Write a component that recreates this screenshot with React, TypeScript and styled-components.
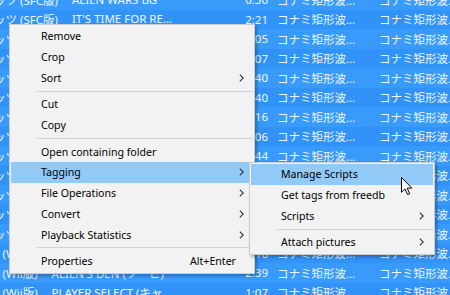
import { createGlobalStyle, styled } from 'styled-components'

type Track = {
  album: string
  title: string
  time: string
}

type MenuEntry =
  | { kind: 'sep' }
  | { kind: 'item'; label: string; shortcut?: string; sub?: boolean; active?: boolean }

const SFC = '魂斗羅スピリッツ (SFC版)'
const WII = '魂斗羅ReBirth (Wii版)'
const COMPOSER = 'コナミ矩形波…'

const tracks: Track[] = [
  { album: SFC, title: 'ALIEN WARS BG', time: '0:30' },
  { album: SFC, title: "IT'S TIME FOR RE…", time: '2:21' },
  { album: SFC, title: 'GROUND ZERO', time: '1:05' },
  { album: SFC, title: 'NEO KOBE STEEL FAC…', time: '1:07' },
  { album: SFC, title: 'THE ROAD WARRIORS', time: '1:40' },
  { album: SFC, title: 'TRIUMPH', time: '0:40' },
  { album: SFC, title: 'BOMBER BIRD', time: '1:16' },
  { album: SFC, title: 'SUPER HUMAN', time: '1:06' },
  { album: SFC, title: 'PRELUDE TO THE BATT…', time: '1:44' },
  { album: SFC, title: 'KIMKOH', time: '2:21' },
  { album: SFC, title: 'A SEA OF BOMBS', time: '0:45' },
  { album: SFC, title: 'ENDING', time: '1:58' },
  { album: SFC, title: 'GAME OVER', time: '0:07' },
  { album: WII, title: 'TITLE', time: '0:16' },
  { album: WII, title: "ALIEN'S DEN (ソービ)", time: '2:39' },
  { album: WII, title: 'PLAYER SELECT (キャ…', time: '1:07' },
]

const mainMenu: MenuEntry[] = [
  { kind: 'item', label: 'Remove' },
  { kind: 'item', label: 'Crop' },
  { kind: 'item', label: 'Sort', sub: true },
  { kind: 'sep' },
  { kind: 'item', label: 'Cut' },
  { kind: 'item', label: 'Copy' },
  { kind: 'sep' },
  { kind: 'item', label: 'Open containing folder' },
  { kind: 'item', label: 'Tagging', sub: true, active: true },
  { kind: 'item', label: 'File Operations', sub: true },
  { kind: 'item', label: 'Convert', sub: true },
  { kind: 'item', label: 'Playback Statistics', sub: true },
  { kind: 'sep' },
  { kind: 'item', label: 'Properties', shortcut: 'Alt+Enter' },
]

const taggingMenu: MenuEntry[] = [
  { kind: 'item', label: 'Manage Scripts', active: true },
  { kind: 'item', label: 'Get tags from freedb' },
  { kind: 'item', label: 'Scripts', sub: true },
  { kind: 'sep' },
  { kind: 'item', label: 'Attach pictures', sub: true },
]

const Chevron = () => (
  <svg width="5" height="8" viewBox="0 0 5 8">
    <polyline points="0.8,0.6 4.2,4 0.8,7.4" fill="none" stroke="#333" strokeWidth="1.1" />
  </svg>
)

const Cursor = () => (
  <CursorBox>
    <svg width="13" height="19" viewBox="0 0 13 19">
      <path
        d="M0.5 0.5 L0.5 15.2 L4 11.9 L6.6 17.6 L8.7 16.7 L6.2 11.1 L10.8 11.1 Z"
        fill="#fff"
        stroke="#000"
        strokeWidth="1"
        strokeLinejoin="round"
      />
    </svg>
  </CursorBox>
)

const Menu = ({ entries, $left, $top, $width }: { entries: MenuEntry[]; $left: number; $top: number; $width: number }) => (
  <MenuBox $left={$left} $top={$top} $width={$width}>
    {entries.map((entry, i) =>
      entry.kind === 'sep' ? (
        <Separator key={i} />
      ) : (
        <Item key={i} $active={entry.active}>
          <Label>{entry.label}</Label>
          {entry.shortcut && <Shortcut>{entry.shortcut}</Shortcut>}
          <Arrow>{entry.sub && <Chevron />}</Arrow>
        </Item>
      ),
    )}
  </MenuBox>
)

const App = () => {
  return (
    <Screen>
      <GlobalStyle />
      <List>
        {tracks.map((t, i) => (
          <Row key={i} $odd={i % 2 === 1}>
            <NameCell>
              <span>{t.album}</span>
              <span>{t.title}</span>
            </NameCell>
            <TimeCell>{t.time}</TimeCell>
            <TextCell>{COMPOSER}</TextCell>
            <TextCell>{COMPOSER}</TextCell>
          </Row>
        ))}
      </List>
      <Menu entries={mainMenu} $left={9} $top={24} $width={246} />
      <Menu entries={taggingMenu} $left={249} $top={162} $width={186} />
      <Cursor />
    </Screen>
  )
}

const GlobalStyle = createGlobalStyle`
  html, body {
    margin: 0;
    padding: 0;
  }
  body {
    width: 450px;
    height: 295px;
    overflow: hidden;
    background: #3399ff;
  }
`

const Screen = styled.div`
  position: relative;
  width: 450px;
  height: 295px;
  overflow: hidden;
  background: #3399ff;
`

const List = styled.div`
  display: flex;
  flex-direction: column;
  margin: -10px 0 0 -75px;
  font-family: 'Noto Sans', 'Noto Sans CJK JP', sans-serif;
  font-size: 11.5px;
  color: #eef6ff;
`

const Row = styled.div<{ $odd: boolean }>`
  display: grid;
  grid-template-columns: 265px 78px 102px 130px;
  align-items: center;
  height: 19.5px;
  flex-shrink: 0;
  background: ${(p) => (p.$odd ? '#3193f7' : '#389bfc')};
  white-space: nowrap;
`

const NameCell = styled.div`
  display: flex;
  gap: 14px;
  overflow: hidden;
`

const TimeCell = styled.div`
  text-align: right;
`

const TextCell = styled.div`
  padding-left: 9px;
  overflow: hidden;
`

const MenuBox = styled.div<{ $left: number; $top: number; $width: number }>`
  position: absolute;
  left: ${(p) => p.$left}px;
  top: ${(p) => p.$top}px;
  width: ${(p) => p.$width}px;
  box-sizing: border-box;
  padding: 1px;
  background: #f2f2f2;
  border: 1px solid #cccccc;
  box-shadow: 2px 2px 3px rgba(0, 0, 0, 0.3);
  font-family: 'Noto Sans', sans-serif;
  font-size: 10.6px;
  color: #000;
`

const Item = styled.div<{ $active?: boolean }>`
  display: flex;
  align-items: center;
  height: 20.7px;
  padding: 0 7px 0 30px;
  background: ${(p) => (p.$active ? '#91c9f7' : 'transparent')};
  white-space: nowrap;
`

const Label = styled.span`
  flex: 1;
`

const Shortcut = styled.span``

const Arrow = styled.span`
  display: flex;
  justify-content: center;
  align-items: center;
  width: 10px;
`

const Separator = styled.div`
  height: 1px;
  margin: 2.5px 0 2.5px 26px;
  background: #d2d2d2;
`

const CursorBox = styled.div`
  position: absolute;
  left: 401px;
  top: 177px;
  line-height: 0;
`

export default App
